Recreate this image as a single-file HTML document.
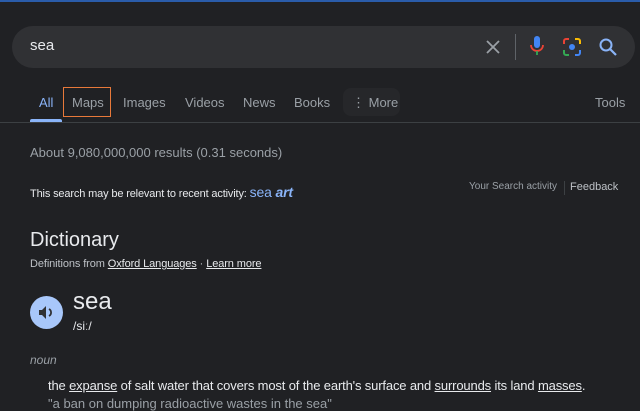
<!DOCTYPE html>
<html><head><style>
body{margin:0;width:640px;height:400px;background:#202124;font-family:"Liberation Sans",sans-serif;overflow:hidden;position:relative;color:#bdc1c6}
.a{position:absolute;white-space:nowrap}
u{text-decoration:underline}
</style></head><body>
<div class="a" style="left:0;top:0;width:640px;height:2px;background:#2a5caa"></div>
<div class="a" style="left:12px;top:26px;width:623px;height:42px;background:#303134;border-radius:21px"></div>
<div class="a" style="left:30px;top:37px;font-size:15px;color:#e8eaed">sea</div>
<svg class="a" style="left:484px;top:38px" width="18" height="18" viewBox="0 0 18 18"><path d="M3 3L15 15M15 3L3 15" stroke="#9aa0a6" stroke-width="1.8"/></svg>
<div class="a" style="left:515px;top:34px;width:1px;height:26px;background:#5f6368"></div>
<svg class="a" style="left:528px;top:35px" width="18" height="22" viewBox="0 0 18 22"><rect x="6" y="1" width="6" height="12" rx="3" fill="#4285f4"/><path d="M3 10a6 6 0 0 0 12 0" stroke="#ea4335" stroke-width="1.8" fill="none"/><path d="M9 16v4" stroke="#34a853" stroke-width="1.8"/></svg>
<svg class="a" style="left:562px;top:37px" width="20" height="20" viewBox="0 0 20 20"><path d="M2 7V4a2 2 0 0 1 2-2h3" stroke="#ea4335" stroke-width="2" fill="none"/><path d="M13 2h3a2 2 0 0 1 2 2v3" stroke="#fbbc04" stroke-width="2" fill="none"/><path d="M2 13v3a2 2 0 0 0 2 2h3" stroke="#34a853" stroke-width="2" fill="none"/><path d="M13 18h3a2 2 0 0 0 2-2v-3" stroke="#4285f4" stroke-width="2" fill="none"/><circle cx="10" cy="10" r="3" fill="#4285f4"/></svg>
<svg class="a" style="left:598px;top:37px" width="20" height="20" viewBox="0 0 20 20"><circle cx="8" cy="8" r="5.5" stroke="#8ab4f8" stroke-width="2" fill="none"/><path d="M12 12l6 6" stroke="#8ab4f8" stroke-width="2.2"/></svg>
<div class="a" style="left:39px;top:95px;font-size:13px;color:#8ab4f8">All</div>
<div class="a" style="left:30px;top:119px;width:32px;height:3px;background:#8ab4f8;border-radius:2px 2px 0 0"></div>
<div class="a" style="left:63px;top:87px;width:48px;height:30px;border:1px solid #e8793a;box-sizing:border-box"></div>
<div class="a" style="left:72px;top:95px;font-size:13px;color:#9aa0a6">Maps</div>
<div class="a" style="left:123px;top:95px;font-size:13px;color:#9aa0a6">Images</div>
<div class="a" style="left:185px;top:95px;font-size:13px;color:#9aa0a6">Videos</div>
<div class="a" style="left:243px;top:95px;font-size:13px;color:#9aa0a6">News</div>
<div class="a" style="left:294px;top:95px;font-size:13px;color:#9aa0a6">Books</div>
<div class="a" style="left:343px;top:88px;width:57px;height:28px;background:#26272a;border-radius:8px"></div>
<div class="a" style="left:352px;top:95px;font-size:13px;color:#9aa0a6">⋮ More</div>
<div class="a" style="left:595px;top:95px;font-size:13px;color:#9aa0a6">Tools</div>
<div class="a" style="left:0;top:122px;width:640px;height:1px;background:#3c4043"></div>
<div class="a" style="left:30px;top:145px;font-size:13px;color:#9aa0a6">About 9,080,000,000 results (0.31 seconds)</div>
<div class="a" style="left:30px;top:184px;font-size:11px;color:#e8eaed;letter-spacing:-0.15px">This search may be relevant to recent activity: <span style="font-size:14px;color:#8ab4f8">sea <b><i>art</i></b></span></div>
<div class="a" style="left:469px;top:181px;font-size:10px;color:#9aa0a6">Your Search activity</div>
<div class="a" style="left:564px;top:181px;width:1px;height:14px;background:#3c4043"></div>
<div class="a" style="left:570px;top:181px;font-size:11px;color:#bdc1c6">Feedback</div>
<div class="a" style="left:30px;top:229px;font-size:20px;color:#e8eaed">Dictionary</div>
<div class="a" style="left:30px;top:258px;font-size:11px;color:#bdc1c6;letter-spacing:-0.1px">Definitions from <u style="color:#e8eaed">Oxford Languages</u> · <u style="color:#e8eaed">Learn more</u></div>
<div class="a" style="left:30px;top:296px;width:33px;height:33px;border-radius:50%;background:#a8c7fa"></div>
<svg class="a" style="left:37px;top:303px" width="19" height="19" viewBox="0 0 19 19"><path d="M2 7h3l4-4v13l-4-4H2z" fill="#303134"/><path d="M12 6a4 4 0 0 1 0 7" stroke="#303134" stroke-width="1.8" fill="none"/></svg>
<div class="a" style="left:73px;top:288px;font-size:24px;color:#e8eaed">sea</div>
<div class="a" style="left:73px;top:319px;font-size:12px;color:#e8eaed">/siː/</div>
<div class="a" style="left:30px;top:353px;font-size:12px;color:#9aa0a6;font-style:italic">noun</div>
<div class="a" style="left:48px;top:378px;font-size:13px;color:#e8eaed;letter-spacing:-0.15px">the <u>expanse</u> of salt water that covers most of the earth's surface and <u>surrounds</u> its land <u>masses</u>.</div>
<div class="a" style="left:48px;top:396px;font-size:13px;color:#9aa0a6">"a ban on dumping radioactive wastes in the sea"</div>
</body></html>
